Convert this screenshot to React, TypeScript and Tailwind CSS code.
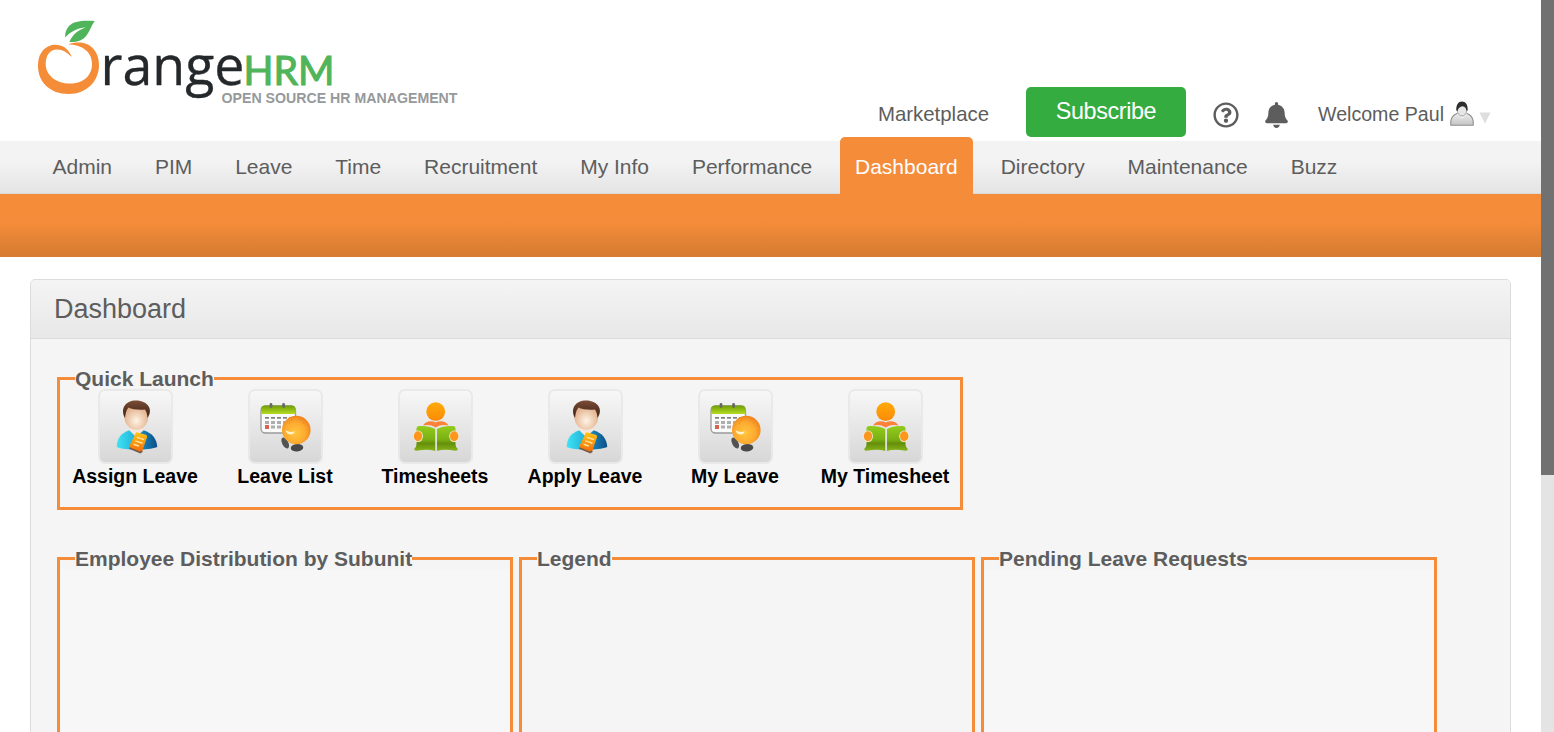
import type { ReactNode } from "react";
import { FaBell, FaRegQuestionCircle } from "react-icons/fa";

const navItems = [
  "Admin",
  "PIM",
  "Leave",
  "Time",
  "Recruitment",
  "My Info",
  "Performance",
  "Dashboard",
  "Directory",
  "Maintenance",
  "Buzz",
];

function Logo() {
  return (
    <svg width="435" height="100" viewBox="36 18 435 100" className="block">
      <path
        fill="#f58c38"
        d="M71.8 57C68 47 60 43.8 52 45C42 47.5 38 56 38 66C38 82 50 94 68.5 94C87 94 99 81 99 65C99 52 91 42.5 79 42.5C75 42.5 71 43 68.3 44.5C81 44.5 92 51 92 64C92 76 83 83.6 70 83.6C56 83.6 45.7 75 45.7 64C45.7 55 50 49.5 57 49.5C63 49.5 67 52.5 71.8 57Z"
      />
      <path
        fill="#50b45a"
        d="M94.7 21C82 20.2 74 21 69 26C66 29.3 64.7 33.5 65.3 37.6C70 31.5 78 28 86 27.2C78 30 72 35 69.4 42C77 42.3 83 40.5 86.5 35.5C90 31 91 26 94.7 21Z"
      />
      <text x="100.5" y="85.2" fontFamily="'Open Sans', sans-serif" fontSize="55" fill="#25282a" stroke="#25282a" strokeWidth="0.3" textLength="144" lengthAdjust="spacingAndGlyphs">
        range
      </text>
      <text x="243.5" y="84.5" fontFamily="Lato, sans-serif" fontSize="40" fill="#50b45a" stroke="#50b45a" strokeWidth="1.1" textLength="91" lengthAdjust="spacingAndGlyphs">
        HRM
      </text>
      <text x="221.5" y="102.7" fontFamily="'Liberation Sans', Arial, sans-serif" fontWeight="bold" fontSize="14.3" fill="#96999b" textLength="236" lengthAdjust="spacingAndGlyphs">
        OPEN SOURCE HR MANAGEMENT
      </text>
    </svg>
  );
}

function UserAvatar() {
  return (
    <svg width="24" height="26" viewBox="0 0 24 26" className="mt-[4px] block">
      <defs>
        <linearGradient id="shirt" x1="0" y1="0" x2="0" y2="1">
          <stop offset="0" stopColor="#ececec" />
          <stop offset="1" stopColor="#c4c4c4" />
        </linearGradient>
      </defs>
      <path d="M.8 24.3V20C1.5 15.5 3.5 13.8 7 12.5H17C20.5 13.8 22.5 15.5 23.2 20V24.3Z" fill="url(#shirt)" stroke="#8e8e8e" strokeWidth="1.1" />
      <path d="M7 13L12 18L17 13L15 10H9Z" fill="#f0f0f0" />
      <ellipse cx="12" cy="9" rx="4.8" ry="6" fill="#e6e6e6" stroke="#8f8f8f" strokeWidth=".8" />
      <path d="M6.3 9.5C6 3.5 8.5 .5 12 .5S18 3.5 17.7 9.5L16.4 9.5C16.4 7 15 5.8 12.6 5.2C10 5.8 8 7 7.7 9.8Z" fill="#2d2d2d" />
    </svg>
  );
}

function PersonIcon() {
  return (
    <>
      <defs>
        <linearGradient id="body">
          <stop offset="0" stopColor="#3fe3f5" />
          <stop offset=".4" stopColor="#25b8dc" />
          <stop offset=".65" stopColor="#1680b8" />
          <stop offset="1" stopColor="#0c4f85" />
        </linearGradient>
        <radialGradient id="face" cx=".5" cy=".65" r=".6">
          <stop offset="0" stopColor="#fff4e6" />
          <stop offset="1" stopColor="#dfa981" />
        </radialGradient>
        <linearGradient id="hair" x1="0" y1="0" x2="0" y2="1">
          <stop offset="0" stopColor="#7a4c36" />
          <stop offset="1" stopColor="#3e2015" />
        </linearGradient>
        <linearGradient id="note" x1="0" y1="0" x2="0" y2="1">
          <stop offset="0" stopColor="#ffc414" />
          <stop offset="1" stopColor="#f36a0c" />
        </linearGradient>
      </defs>
      <path d="M18.7 58C19 49 23 44 32 41H45C54 44 58.5 49 59.3 58C53 60 48 60.5 39 60.5S24 60 18.7 58Z" fill="url(#body)" />
      <path d="M31 41L38 48L46 41L43 37H34Z" fill="#f5e6db" />
      <ellipse cx="38.3" cy="27.8" rx="12" ry="13" fill="url(#face)" />
      <path d="M27 29C23.5 23 24.5 16 31 13C38 9.8 48 12 51 18C53 22 51.5 26 49.5 29C49.3 25 48.5 23 47 20.5C41 21 34 20.5 30.5 18.5C28 21 27.5 25 27 29Z" fill="url(#hair)" />
      <path d="M39.5 43.4L47.8 45.7Q49.6 46.3 49 48.2L44.3 62Q43.6 63.8 41.8 63.2L32.2 59.6Q30.6 59 31.3 57.2L37.5 44.4Q38.2 43 39.5 43.4Z" fill="url(#note)" />
      <path d="M31.3 59L42.3 63.5L44.3 62" fill="none" stroke="#765b4b" strokeWidth="1.6" />
      <path d="M38.8 48.3L46 50.6M37.2 51.9L44.5 54.3M35.6 55.3L40.8 57" stroke="#ffe29a" strokeWidth="1.5" />
    </>
  );
}

function CalendarIcon() {
  return (
    <>
      <defs>
        <linearGradient id="calTop" x1="0" y1="0" x2="0" y2="1">
          <stop offset="0" stopColor="#6f9d05" />
          <stop offset="1" stopColor="#b5dd24" />
        </linearGradient>
        <radialGradient id="ball" cx=".45" cy=".6" r=".6">
          <stop offset="0" stopColor="#ffc640" />
          <stop offset=".6" stopColor="#fdab30" />
          <stop offset="1" stopColor="#f0831c" />
        </radialGradient>
      </defs>
      <rect x="13" y="17" width="34.5" height="27" rx="4.5" fill="#fafafa" stroke="#9a9a9a" strokeWidth="1.3" />
      <path d="M13 25V20Q13 16.5 17 16.5H43.5Q47.5 16.5 47.5 20V25Z" fill="url(#calTop)" />
      <path d="M23 15.5V17.5M35.6 15.5V17.5" stroke="#686868" strokeWidth="2.8" strokeLinecap="round" />
      <path d="M17 28.8H45" stroke="#555" strokeWidth="1.3" strokeDasharray="4 2" />
      <path d="M17 33.5H40M23 38H40" stroke="#adadad" strokeWidth="3" strokeDasharray="4 2" />
      <rect x="17" y="36" width="4" height="4" fill="#d9624f" />
      <ellipse cx="37.2" cy="54" rx="3" ry="6" transform="rotate(-28 37.2 54)" fill="#525252" />
      <ellipse cx="49" cy="58.7" rx="6.3" ry="3.7" transform="rotate(-5 49 58.7)" fill="#484848" />
      <circle cx="48.3" cy="41" r="14.3" fill="url(#ball)" />
      <path d="M37.5 41.3Q42.5 44.3 46.8 42.3Q45.5 46 42 45.5Q38.5 45 37.5 41.3Z" fill="#fff3c9" />
      <path d="M41 34h1M43 31h1M52 31h1M55 34h1" stroke="#e08528" strokeWidth="1.2" />
    </>
  );
}

function ReaderIcon() {
  return (
    <>
      <defs>
        <linearGradient id="head" x1="0" y1="0" x2="0" y2="1">
          <stop offset="0" stopColor="#ffab08" />
          <stop offset="1" stopColor="#fb8a08" />
        </linearGradient>
        <linearGradient id="book" x1="0" y1="0" x2="0" y2="1">
          <stop offset="0" stopColor="#93cc1c" />
          <stop offset=".55" stopColor="#7aaf12" />
          <stop offset=".7" stopColor="#668f0c" />
          <stop offset="1" stopColor="#86b518" />
        </linearGradient>
      </defs>
      <circle cx="37.7" cy="22.7" r="9.4" fill="url(#head)" />
      <path d="M25 36.5Q28 32.3 32.5 32.3Q36 32.3 37.7 33.5Q39.5 32.3 43 32.3Q47.5 32.3 50.5 36.5Q43 35 37.7 38.5Q32 35 25 36.5Z" fill="#fb8238" />
      <path d="M18.5 39Q19 36.8 21.5 37Q31 36.5 37.2 40V62Q30 59.5 18.5 61.8Q15.5 61.5 16.5 59.5Q18.5 58 18.5 55Z" fill="url(#book)" />
      <path d="M57.5 39Q57 36.8 54.5 37Q45 36.5 39 40V62Q46 59.5 57.5 61.8Q60.5 61.5 59.5 59.5Q57.5 58 57.5 55Z" fill="url(#book)" />
      <ellipse cx="20" cy="47.3" rx="5" ry="5.8" fill="#efeedd" />
      <ellipse cx="56.2" cy="47.3" rx="5" ry="5.8" fill="#efeedd" />
      <ellipse cx="20" cy="47.3" rx="4.2" ry="5" fill="#fd961d" />
      <ellipse cx="56.2" cy="47.3" rx="4.2" ry="5" fill="#fd961d" />
    </>
  );
}

const launchers: { label: string; icon: ReactNode }[] = [
  { label: "Assign Leave", icon: <PersonIcon /> },
  { label: "Leave List", icon: <CalendarIcon /> },
  { label: "Timesheets", icon: <ReaderIcon /> },
  { label: "Apply Leave", icon: <PersonIcon /> },
  { label: "My Leave", icon: <CalendarIcon /> },
  { label: "My Timesheet", icon: <ReaderIcon /> },
];

function Launcher({ label, icon }: { label: string; icon: ReactNode }) {
  return (
    <a className="flex w-[150px] flex-col items-center">
      <span className="flex h-[75px] w-[75px] rounded-[7px] border-2 border-[#e9e9e7] bg-linear-to-b from-[#f8f8f8] to-[#d6d6d6] bg-origin-border">
        <svg width="75" height="75" viewBox="0 0 75 75" className="-m-[2px] block shrink-0">
          {icon}
        </svg>
      </span>
      <span className="text-[19.5px] leading-[24px] font-bold whitespace-nowrap text-black">{label}</span>
    </a>
  );
}

function Group({ title, className, children }: { title: string; className: string; children?: ReactNode }) {
  return (
    <fieldset className={`border-[3px] border-[#f48c3a] ${className}`}>
      <legend className="ml-[15px] h-[21px] text-[21px] leading-[21px] font-bold whitespace-nowrap text-[#5d5d5d]">
        {title}
      </legend>
      {children}
    </fieldset>
  );
}

export default function App() {
  return (
    <div className="flex h-[732px] w-[1554px] overflow-hidden bg-white font-['Liberation_Sans',Arial,sans-serif] text-[#5d5d5d]">
      <div className="flex w-[1541px] shrink-0 flex-col">
        <header className="flex h-[141px] shrink-0 items-start justify-between pt-[18px] pr-[50px] pl-[36px]">
          <Logo />
          <div className="flex items-center pt-[69px] text-[19.5px]">
            <span className="mr-[37px] pt-[4px] text-[20.4px]">Marketplace</span>
            <button className="mr-[27px] h-[50px] w-[160px] rounded-[5px] bg-[#34ac40] pb-px text-[23.4px] leading-none tracking-[-0.4px] text-white">
              Subscribe
            </button>
            <FaRegQuestionCircle className="mt-[6px] mr-[26px] h-[26px] w-[26px]" />
            <FaBell className="mt-[6px] mr-[30px] h-[26px] w-[23px]" />
            <span className="mr-[6px] pt-[5px] text-[19.6px] whitespace-nowrap">Welcome Paul</span>
            <UserAvatar />
            <svg width="12" height="12" viewBox="0 0 12 12" className="mt-[11px] ml-[5px]">
              <path d="M.5 .5H11.5L6 11.5Z" fill="#dedede" />
            </svg>
          </div>
        </header>

        <nav className="flex h-[53px] shrink-0 items-end gap-[12.9px] border-b border-[#d9d9d9] bg-linear-to-b from-[#f3f3f3] from-40% to-[#e4e4e4] pl-[37.5px]">
          {navItems.map((item) => (
            <a
              key={item}
              className={
                item === "Dashboard"
                  ? "-mb-px flex h-[57px] items-center rounded-t-[5px] bg-[#f48c3a] px-[15px] pt-[2px] text-[21px] text-white"
                  : "flex h-[52px] items-center px-[15px] text-[21px]"
              }
            >
              {item}
            </a>
          ))}
        </nav>
        <div className="h-[63px] shrink-0 bg-linear-to-b from-[#f48c3a] from-45% to-[#d67b31]" />

        <main className="mt-[22px] ml-[30px] flex h-[600px] w-[1481px] shrink-0 flex-col rounded-t-[5px] border border-[#dcdcdc] bg-[#f5f5f5]">
          <h1 className="flex h-[59px] shrink-0 items-center rounded-t-[4px] border-b border-[#dcdcdc] bg-linear-to-b from-[#f4f4f4] to-[#e8e8e8] pl-[23px] text-[27px]">
            Dashboard
          </h1>
          <div className="flex flex-col gap-[38px] pt-[29px] pl-[26px]">
            <Group title="Quick Launch" className="h-[142px] w-[906px]">
              <div className="flex">
                {launchers.map((l) => (
                  <Launcher key={l.label} {...l} />
                ))}
              </div>
            </Group>
            <div className="flex gap-[6px]">
              <Group title="Employee Distribution by Subunit" className="h-[300px] w-[456px]">
                <div className="h-[270px] bg-[#f7f7f7]" />
              </Group>
              <Group title="Legend" className="h-[300px] w-[456px]" />
              <Group title="Pending Leave Requests" className="h-[300px] w-[456px]">
                <div className="h-[270px] bg-[#f7f7f7]" />
              </Group>
            </div>
          </div>
        </main>
      </div>
      <div className="w-[13px] bg-[#e4e4e4]">
        <div className="h-[475px] bg-[#717171]" />
      </div>
    </div>
  );
}
